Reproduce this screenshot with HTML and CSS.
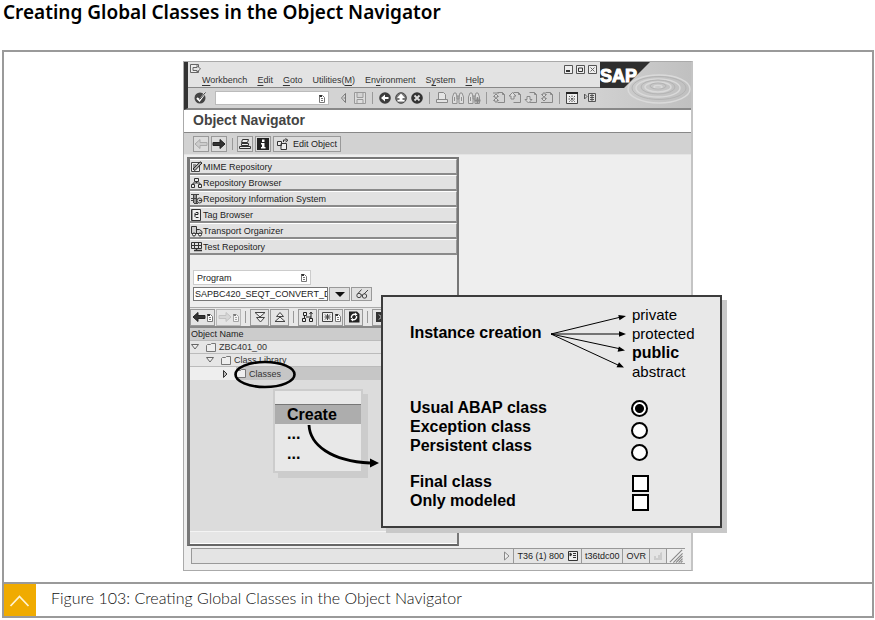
FILE: index.html
```html
<!DOCTYPE html>
<html lang="en">
<head>
<meta charset="utf-8">
<title>Creating Global Classes in the Object Navigator</title>
<link rel="stylesheet" href="styles.css">
</head>
<body>
<svg class="defs" aria-hidden="true">
  <symbol id="drop" viewBox="0 0 8 9"><path d="M1.500 1.500h3l2 2v5h-5zM3 4.500h2M3 6.500h2" fill="#fff" stroke="#777"/><path d="M1 1h3v2H2z" fill="#333"/></symbol>
  <symbol id="left" viewBox="0 0 14 12"><path d="M1 6l5-4.500v3h7v3H6v3z" stroke="currentColor"/></symbol>
  <symbol id="right" viewBox="0 0 14 12"><path d="M13 6L8 1.500v3H1v3h7v3z" stroke="currentColor"/></symbol>
  <symbol id="find" viewBox="0 0 16 16"><path d="M2.500 13.500V7l1.500-4h2l1 4v6.500zM9 13.500V7l1-4h2l1.500 4v6.500zM7 6h2v3H7zM4.500 7v4M11.500 7v4" fill="#ddd" stroke="#909090"/></symbol>
  <symbol id="page" viewBox="0 0 16 16"><path d="M6.500 2.500h5l2 2v8h-7M11.500 2.500v2h2" fill="none" stroke="#888"/></symbol>
  <symbol id="folder" viewBox="0 0 12 11"><path d="M1.500 9.500v-6l1-1h3l1-1h4v8z" fill="#eee" stroke="#777"/></symbol>
  <symbol id="hier" viewBox="0 0 13 12"><path d="M4.500 1.500h4v3h-4zM1.500 7.500h3v3h-3zM8.500 7.500h3v3h-3zM6.500 4.500V6M3 7.500V6h7v1.500" fill="#eee" stroke="#333"/></symbol>
</svg>

<h1>Creating Global Classes in the Object Navigator</h1>

<figure class="figure">
  <div class="stage">
    <section class="window" aria-label="Object Navigator">
      <header class="topbar">
        <div class="bars">
          <div class="menubar">
            <div class="sysrow">
              <svg class="sysicon" viewBox="0 0 12 10"><path d="M9.500 3V.5h-8v8h8V7M4 3.500h4v-2L11.500 5 8 8V6.500H4z" fill="#eee" stroke="#666"/></svg>
              <div class="winbtns">
                <button type="button" aria-label="Minimize"><svg viewBox="0 0 9 9"><path d="M.5.5h8v8h-8z" fill="#eee" stroke="#555"/><path d="M2 5h4v2H2z" fill="#333"/></svg></button>
                <button type="button" aria-label="Maximize"><svg viewBox="0 0 9 9"><path d="M.5.5h8v8h-8z" fill="#eee" stroke="#555"/><path d="M2.500 3h4v3.500h-4z" fill="none" stroke="#333"/></svg></button>
                <button type="button" aria-label="Close"><svg viewBox="0 0 9 9"><path d="M.5.5h8v8h-8z" fill="#eee" stroke="#555"/><path d="M2.500 2.500l4 4m0-4l-4 4" stroke="#666"/></svg></button>
              </div>
            </div>
            <nav class="menus">
              <a href="#"><u>W</u>orkbench</a><a href="#"><u>E</u>dit</a><a href="#"><u>G</u>oto</a><a href="#">Utilities(<u>M</u>)</a><a href="#">En<u>v</u>ironment</a><a href="#">S<u>y</u>stem</a><a href="#"><u>H</u>elp</a>
            </nav>
          </div>
          <div class="toolbar">
            <button type="button" class="cell" aria-label="Enter"><svg viewBox="0 0 16 16"><circle cx="8" cy="8" r="5.500" fill="#444"/><path d="M5 8l2.500 2.500L13 3" fill="none" stroke="#fff" stroke-width="2"/><path d="M7.500 9.500L13.500 2.500" stroke="#333"/></svg></button>
            <div class="command"><input type="text" aria-label="Command"><svg class="drop"><use href="#drop"/></svg></div>
            <button type="button" class="cell" aria-label="Collapse"><svg viewBox="0 0 16 16"><path d="M9.500 3.500L5.500 8l4 4.500zM7.500 8h2" fill="#ddd" stroke="#777"/></svg></button>
            <button type="button" class="cell" aria-label="Save"><svg viewBox="0 0 16 16"><path d="M2.500 2.500h11v11h-11zM5 2.500v5h6v-5M5 13.500v-4h6v4" fill="#ddd" stroke="#999"/></svg></button>
            <span class="sep"></span>
            <button type="button" class="cell" aria-label="Back"><svg viewBox="0 0 16 16"><circle cx="8" cy="8" r="5.800" fill="#3c3c3c"/><path d="M4 8l4-3.500V7h3.500v2H8v2.500z" fill="#fff"/></svg></button>
            <button type="button" class="cell" aria-label="Exit"><svg viewBox="0 0 16 16"><circle cx="8" cy="8" r="5.300" fill="#777" stroke="#444"/><path d="M8 3.500L12 8H9.500v2h2v1.500h-7V10h2V8H4z" fill="#fff"/></svg></button>
            <button type="button" class="cell" aria-label="Cancel"><svg viewBox="0 0 16 16"><circle cx="8" cy="8" r="5.800" fill="#333"/><path d="M5.500 5.500l5 5m0-5l-5 5" stroke="#ddd" stroke-width="1.800"/></svg></button>
            <span class="sep"></span>
            <button type="button" class="cell" aria-label="Print"><svg viewBox="0 0 16 16"><path d="M4.500 9V2.500h5l2 2V9M2.500 9.500h11v3h-11z" fill="#e4e4e4" stroke="#888"/></svg></button>
            <button type="button" class="cell" aria-label="Find"><svg><use href="#find"/></svg></button>
            <button type="button" class="cell" aria-label="Find next"><svg viewBox="0 0 16 16"><use href="#find"/><path d="M11.500 7.500v6M8.500 10.500h6" stroke="#888" stroke-width="2"/></svg></button>
            <span class="sep"></span>
            <button type="button" class="cell" aria-label="First page"><svg viewBox="0 0 16 16"><use href="#page"/><path d="M2 3h6M5 4L2.500 6.500H4V8h2V6.500h1.500zM5 8l-2.500 2.500H4V12h2v-1.500h1.500z" fill="#ddd" stroke="#888"/></svg></button>
            <button type="button" class="cell" aria-label="Previous page"><svg viewBox="0 0 16 16"><use href="#page"/><path d="M5.500 2.500L2 6h2v3h3V6h2z" fill="#ddd" stroke="#888"/></svg></button>
            <button type="button" class="cell" aria-label="Next page"><svg viewBox="0 0 16 16"><use href="#page"/><path d="M5.500 13L2 9.500h2v-3h3v3h2z" fill="#ddd" stroke="#888"/></svg></button>
            <button type="button" class="cell" aria-label="Last page"><svg viewBox="0 0 16 16"><use href="#page"/><path d="M5 7L2.500 4.500H4V3h2v1.500h1.500zM5 11L2.500 8.500H4V7h2v1.500h1.500zM2 12.500h6" fill="#ddd" stroke="#888"/></svg></button>
            <span class="sep"></span>
            <button type="button" class="cell" aria-label="New session"><svg viewBox="0 0 16 16"><path d="M2.500 2.500h11v11h-11z" fill="#eee" stroke="#444"/><path d="M2 3h12" stroke="#222" stroke-width="2"/><path d="M5 6l6 6m0-6l-6 6M8 5.500v7M4.500 9h7" stroke="#555" stroke-dasharray="1.500 1"/></svg></button>
            <button type="button" class="cell" aria-label="Shortcut"><svg viewBox="0 0 16 16"><path d="M2.500 4L5 6.500 2.500 9z" fill="none" stroke="#555"/><path d="M6.500 3.500h7v8h-7zM8 5.500h4M8 7.500h4M8 9.500h4M10 4v7" fill="#ddd" stroke="#555"/></svg></button>
          </div>
        </div>
        <svg class="logo" viewBox="0 0 91 46" role="img" aria-label="SAP">
          <defs><linearGradient id="water" x1="0" x2="1"><stop offset="0" stop-color="#d0d0d0"/><stop offset=".5" stop-color="#c8c8c8"/><stop offset="1" stop-color="#c0c0c0"/></linearGradient></defs>
          <path d="M0 0h91v46H0z" fill="url(#water)"/>
          <g fill="none" stroke="#dadada" stroke-width="1.500"><ellipse cx="58" cy="25" rx="4" ry="1.500"/><ellipse cx="58" cy="25" rx="13" ry="5"/><ellipse cx="58" cy="26" rx="22" ry="9"/><ellipse cx="59" cy="27" rx="31" ry="14"/></g>
          <g fill="none" stroke="#b4b4b4"><ellipse cx="58" cy="24" rx="8" ry="3"/><ellipse cx="58" cy="25" rx="17" ry="7"/><ellipse cx="59" cy="26" rx="27" ry="11.500"/></g>
          <path d="M0 0h50L24 26H0z" fill="#2e2e2e"/>
          <text x="0" y="20" class="logotext">SAP</text>
        </svg>
      </header>

      <h2 class="title">Object Navigator</h2>

      <div class="apptools">
        <button type="button" class="btn dim" aria-label="Previous object"><svg><use href="#left"/></svg></button>
        <button type="button" class="btn" aria-label="Next object"><svg class="solid"><use href="#right"/></svg></button>
        <span class="sep"></span>
        <button type="button" class="btn" aria-label="Other object"><svg viewBox="0 0 14 12"><path d="M4.500 1.500h6l-1 3h-6zM3.500 5.500h7v2h-7zM1.500 8.500h11v2h-11z" fill="#eee" stroke="#333"/></svg></button>
        <button type="button" class="btn" aria-label="Information"><svg viewBox="0 0 14 12"><path d="M1 0h12v12H1z" fill="#222"/><path d="M6 1.500h2.500V4H6zM5 5h3.500v4h1v1.500H5V9h1V6.500H5z" fill="#fff"/></svg></button>
        <button type="button" class="btn wide"><svg viewBox="0 0 14 12"><path d="M5 5.500h5.500v6H5zM1.500 3.500h4v4h-4z" fill="#eee" stroke="#333"/><path d="M7.500 4V2h3M9.500.500L12 2.300 9.500 4" fill="none" stroke="#333"/></svg>Edit Object</button>
      </div>

      <div class="body">
        <div class="panel">
          <div class="tools">
            <button type="button"><svg viewBox="0 0 13 12"><path d="M1.500 1.500h8v9h-8z" fill="#eee" stroke="#444"/><path d="M3 8l2 1.500L12 2 10 .8z" fill="#aaa" stroke="#222"/><path d="M3 4h3M3 6h2" stroke="#333"/></svg>MIME Repository</button>
            <button type="button"><svg><use href="#hier"/></svg>Repository Browser</button>
            <button type="button"><svg viewBox="0 0 13 12"><path d="M1 1.500h8M5 1.500v9M3.500 1v9M6.500 1v9M1 5.500h5M1 7.500h2M4 10.500h4" fill="none" stroke="#444"/><circle cx="9.500" cy="7.500" r="2.500" fill="#ccc" stroke="#444"/><path d="M9 7.500h3" stroke="#333"/></svg>Repository Information System</button>
            <button type="button"><svg viewBox="0 0 13 12"><path d="M1.500.500h9v11h-9z" fill="#eee" stroke="#333"/><path d="M2.500 1v10" stroke="#999"/><path d="M8.500 8.500H6L5 7.500v-3l1-1h2v2H5" fill="none" stroke="#222"/></svg>Tag Browser</button>
            <button type="button"><svg viewBox="0 0 13 12"><path d="M1.500 1.500h5v7h-5zM6.500 4.500h3l2.500 2v2H6.500z" fill="#ccc" stroke="#333"/><circle cx="4" cy="9.500" r="1.500" fill="#fff" stroke="#222"/><circle cx="10" cy="9.500" r="1.500" fill="#fff" stroke="#222"/></svg>Transport Organizer</button>
            <button type="button"><svg viewBox="0 0 13 12"><path d="M1.500 1.500h10v6h-10zM1 4.500h11M4.500 2v5M8.500 2v5" fill="#ddd" stroke="#333"/><path d="M4 9.500h8M6.500 7.500v2" stroke="#333" stroke-width="1.500"/></svg>Test Repository</button>
          </div>

          <div class="finder">
            <div class="kind">
              <select aria-label="Object type"><option>Program</option></select>
              <svg class="drop"><use href="#drop"/></svg>
            </div>
            <div class="objrow">
              <input type="text" aria-label="Object name" value="SAPBC420_SEQT_CONVERT_DATE">
              <button type="button" aria-label="History"><svg viewBox="0 0 14 12"><path d="M2 4h10L7 9z" fill="#111"/></svg></button>
              <button type="button" aria-label="Display"><svg viewBox="0 0 14 12"><circle cx="4" cy="7.500" r="2.200" fill="none" stroke="#444"/><circle cx="9.500" cy="8" r="2.200" fill="none" stroke="#444"/><path d="M3 5.500L6.500 1.500M9 6l4-4M6 7h1.500" stroke="#444"/></svg></button>
            </div>
          </div>

          <div class="treetools">
            <button type="button" class="pair" aria-label="Back"><svg class="solid"><use href="#left"/></svg><svg class="drop"><use href="#drop"/></svg></button>
            <button type="button" class="pair dim" aria-label="Forward"><svg><use href="#right"/></svg><svg class="drop"><use href="#drop"/></svg></button>
            <span class="sep"></span>
            <button type="button" aria-label="Expand"><svg viewBox="0 0 14 12"><path d="M2 1.500h10L7 6zM3.500 6.500h8L7.500 11z" fill="#eee" stroke="#444"/></svg></button>
            <button type="button" aria-label="Collapse"><svg viewBox="0 0 14 12"><path d="M3.500 5.500L7 1.500l3.500 4zM2 10.500l5-4.500 5 4.500z" fill="#eee" stroke="#444"/></svg></button>
            <span class="sep"></span>
            <button type="button" aria-label="Hierarchy"><svg viewBox="0 0 14 12"><path d="M2.500 1.500h3v3h-3zM1.500 7.500h3v3h-3zM8.500 7.500h3v3h-3zM3.500 4.500v3M10 7V2M8.500 3L10 1l1.500 2M5 6h5" fill="#eee" stroke="#222"/></svg></button>
            <button type="button" class="pair" aria-label="Favorites"><svg viewBox="0 0 14 12"><path d="M2.500 1.500h10v9h-10z" fill="#eee" stroke="#444"/><path d="M5 3.500l5 5m0-5l-5 5M7.500 3v6M4.500 6h6" stroke="#444"/></svg><svg class="drop"><use href="#drop"/></svg></button>
            <button type="button" aria-label="Refresh"><svg viewBox="0 0 14 12"><path d="M2 .5h8l2.500 2.500v8.500H2z" fill="#222"/><path d="M4.500 7a3 3 0 0 1 4-3.500M9.500 5a3 3 0 0 1-4 3.500" fill="none" stroke="#fff" stroke-width="1.500"/><path d="M8 1.500l2.500 2L8 5zM6 7L3.500 8.500 6 10.500z" fill="#fff"/></svg></button>
            <span class="sep"></span>
            <button type="button" aria-label="Close tree"><svg viewBox="0 0 14 12"><path d="M1 1h12v10H1z" fill="#333"/><path d="M4 3.500l5 5m0-5l-5 5" stroke="#ddd"/></svg></button>
          </div>

          <div class="treehead">Object Name</div>
          <ul class="tree">
            <li class="lv1"><svg class="twist" viewBox="0 0 8 8"><path d="M.5 1.500h7L4 6z" fill="#eee" stroke="#666"/></svg><svg class="fold"><use href="#folder"/></svg>ZBC401_00</li>
            <li class="lv2"><svg class="twist" viewBox="0 0 8 8"><path d="M.5 1.500h7L4 6z" fill="#eee" stroke="#666"/></svg><svg class="fold"><use href="#folder"/></svg>Class Library</li>
            <li class="lv3"><svg class="twist" viewBox="0 0 8 8"><path d="M2.500.500v7L6 4z" fill="#bbb" stroke="#333"/></svg><svg class="fold"><use href="#folder"/></svg>Classes</li>
          </ul>
          <div class="treefoot"></div>
        </div>
      </div>

      <footer class="status">
        <span class="message"><svg viewBox="0 0 8 10"><path d="M1.500 1v8L6 5z" fill="#eee" stroke="#888"/></svg></span>
        <span class="seg">T36 (1) 800 <svg viewBox="0 0 10 10"><path d="M.5.500h9v9h-9z" fill="#eee" stroke="#333"/><path d="M2 2l2 1.500L2 5zM5 2.500h3M5 4.500h3M5 6.500h3" fill="#333" stroke="#333"/></svg></span>
        <span class="seg">t36tdc00</span>
        <span class="seg">OVR</span>
        <span class="seg"><svg viewBox="0 0 10 10"><path d="M1 9V5h2v2h2V4h2V2l2-1v8z" fill="#ccc"/></svg></span>
        <span class="grip"><svg viewBox="0 0 16 16"><path d="M1 15L15 1M5 15.500L15.500 5M8 15.500l7.500-7.500M11 15.500l4.500-4.500M13.500 15.500l2-2" stroke="#888" stroke-width="1.300"/></svg></span>
      </footer>

      <div class="context" role="menu">
        <button type="button" role="menuitem" class="active">Create</button>
        <button type="button" role="menuitem">...</button>
        <button type="button" role="menuitem">...</button>
      </div>

      <form class="popup">
        <div class="instance">
          <h3>Instance creation</h3>
          <svg class="fan" viewBox="0 0 77 76"><path d="M0 29L70 12M0 29h70M0 29l70 15M0 29l67 31" fill="none" stroke="#000"/><path d="M75 11l-6.500 4.200-1.200-5.200zM75 29l-7 2.700v-5.400zM74 45.500l-7.400 1.200 1.300-5.200zM73 62.500l-7.500-.3 2.500-5z"/></svg>
          <ul class="kinds"><li>private</li><li>protected</li><li><b>public</b></li><li>abstract</li></ul>
        </div>
        <div class="choices first">
          <div class="labels"><label for="usual">Usual ABAP class</label><label for="exception">Exception class</label><label for="persistent">Persistent class</label></div>
          <div class="inputs radios"><input type="radio" name="kind" id="usual" checked><input type="radio" name="kind" id="exception"><input type="radio" name="kind" id="persistent"></div>
        </div>
        <div class="choices">
          <div class="labels"><label for="final">Final class</label><label for="modeled">Only modeled</label></div>
          <div class="inputs checks"><input type="checkbox" id="final"><input type="checkbox" id="modeled"></div>
        </div>
      </form>

      <svg class="marks" viewBox="0 0 200 420" aria-hidden="true">
        <ellipse cx="81" cy="312.500" rx="29.500" ry="12.500" fill="none" stroke="#000" stroke-width="2.600"/>
        <path d="M125 363c1 20 22 36 61 38" fill="none" stroke="#000" stroke-width="2.800"/>
        <path d="M195 401l-9 4.500v-9z"/>
      </svg>
    </section>
  </div>
  <figcaption>
    <span class="flag"><svg viewBox="0 0 32 32"><path d="M6.500 22l9-9.500 9 9.500" fill="none" stroke="#fff3d0" stroke-width="1.800"/></svg></span>
    <span class="caption">Figure 103: Creating Global Classes in the Object Navigator</span>
  </figcaption>
</figure>
</body>
</html>
```
FILE: styles.css
```css
* { box-sizing: border-box; }
body { margin: 0; background: #fff; color: #000; font-family: "Noto Sans", "Open Sans", sans-serif; }
.defs { position: absolute; width: 0; height: 0; }
svg { display: block; flex: none; }
button, input, select { font: inherit; color: inherit; margin: 0; padding: 0; border: 0; background: none; border-radius: 0; }
ul, h1, h2, h3 { margin: 0; padding: 0; list-style: none; }

h1 { padding-left: 3px; font-size: 19px; line-height: 24px; font-weight: 600; }
.figure { margin: 26px 1px 0 2px; border: 2px solid #9a9a9a; }
.stage { padding: 9px 0 11px; }

.window {
  position: relative; display: flex; flex-direction: column;
  max-width: 510px; min-height: 510px; margin: 0 auto;
  border: 1px solid #aaa; border-right: 2px solid #c4c4c4;
  background: #eee; color: #222;
  font: 9px/12px "Liberation Sans", Arial, sans-serif;
}

.topbar { display: flex; height: 48px; border-bottom: 2px solid #888; border-left: 4px solid #333; }
.bars { flex: 1; display: flex; flex-direction: column; }
.menubar { height: 26px; background: #e3e3e3; border-bottom: 1px solid #888; }
.sysrow { display: flex; justify-content: space-between; height: 12px; padding: 2px 3px 0 1px; }
.sysicon { width: 12px; height: 10px; }
.winbtns { display: flex; gap: 3px; }
.winbtns svg { width: 9px; height: 9px; }
.winbtns button { display: flex; align-items: center; }
.menus { display: flex; gap: 10px; padding-left: 14px; }
.menus a { color: #333; text-decoration: none; }
.menus u { text-underline-offset: 2px; }
.toolbar { flex: 1; display: flex; align-items: center; padding-left: 4px; background: #d3d3d3; }
.cell, .cell svg { width: 16px; height: 16px; flex: none; }
.cell:last-child { margin-left: 2px; }
.command { display: flex; align-items: center; width: 114px; height: 14px; margin: 0 7px; padding-right: 2px; background: #fff; border: 1px solid #bbb; }
.command input { flex: 1; min-width: 0; height: 12px; }
.drop { width: 8px; height: 9px; }
.sep { flex: none; width: 9px; height: 12px; background: linear-gradient(#999, #999) center / 1px 100% no-repeat; }
.logo { width: 91px; height: 46px; }
.logotext { font: bold 18px "Liberation Sans", Arial, sans-serif; fill: #fff; stroke: #fff; stroke-width: 1px; }

.title { height: 22px; padding-left: 9px; background: #fff; color: #444; font-size: 14px; line-height: 21px; }
.apptools { display: flex; align-items: center; gap: 2px; height: 23px; padding-left: 9px; background: #d2d2d2; border-top: 1px solid #888; border-bottom: 1px solid #e4e4e4; }
.apptools .sep { width: 6px; }
.btn { display: flex; align-items: center; justify-content: center; width: 16px; height: 16px; border: 1px solid #999; background: #dcdcdc; }
.btn svg { width: 14px; height: 12px; }
.btn.wide { width: auto; padding: 0 3px 0 2px; gap: 3px; }
.solid { fill: #333; color: #222; }
.dim { color: #aaa; fill: #ccc; }

.body { flex: 1; display: flex; padding: 2px 0 0 3px; }
.panel { display: flex; flex-direction: column; width: 272px; background: #eee; border: 2px solid #777; border-left-width: 3px; border-bottom-color: #666; }
.tools { display: flex; flex-direction: column; }
.tools button { display: flex; align-items: center; height: 16px; background: #e2e2e2; border: 0 solid #999; border-width: 1px 1px 2px 0; border-top-color: #fff; border-bottom-color: #8a8a8a; }
.tools svg { width: 13px; height: 12px; }

.finder { display: flex; flex-direction: column; gap: 2px; padding: 15px 0 6px 3px; }
.kind { display: flex; align-items: center; width: 118px; height: 15px; padding: 0 2px 0 3px; background: #fff; border: 1px solid #ccc; }
.kind select { flex: 1; min-width: 0; appearance: none; }
.objrow { display: flex; gap: 1px; height: 14px; }
.objrow input { width: 135px; padding-left: 1px; background: #fff; border: 1px solid #777; }
.objrow button { display: flex; align-items: center; justify-content: center; width: 21px; border: 1px solid #999; background: #e0e0e0; }
.objrow svg, .treetools svg { width: 14px; height: 12px; }

.treetools { display: flex; align-items: center; gap: 1px; height: 19px; overflow: hidden; border-top: 1px solid #aaa; background: #e8e8e8; }
.treetools .sep { width: 7px; }
.treetools button { display: flex; flex: none; align-items: center; justify-content: center; width: 19px; height: 17px; border: 1px solid #999; background: #e4e4e4; }
.treetools .pair { width: 25px; }
.treetools svg.drop { width: 8px; height: 9px; }
.treetools .dim { opacity: .6; }
.treehead { height: 14px; padding-left: 1px; line-height: 13px; background: #ccc; border-top: 2px solid #888; }
.tree { flex: 1; background: #dcdcdc; }
.tree li { display: flex; align-items: center; height: 13px; color: #333; border-top: 1px solid #bbb; background: #e6e6e6; }
.tree .lv1 { padding-left: 1px; }
.tree .lv2 { padding-left: 16px; }
.tree .lv3 { padding-left: 31px; height: 14px; background: linear-gradient(90deg, #eee 46px, #c6c6c6 46px); }
.twist { width: 8px; height: 8px; margin-right: 6px; }
.fold { width: 12px; height: 11px; margin-right: 2px; }
.treefoot { height: 13px; background: #e6e6e6; border-top: 1px solid #f4f4f4; border-bottom: 1px solid #fff; }

.status { display: flex; height: 16px; margin: 2px 6px 6px 7px; line-height: 14px; border: 1px solid #999; border-right: 0; background: #e4e4e4; }
.message { flex: 1; display: flex; align-items: center; justify-content: flex-end; padding-right: 2px; }
.message svg { width: 8px; height: 10px; }
.seg { display: flex; align-items: center; gap: 4px; padding: 0 3px; border-left: 1px solid #999; }
.seg svg { width: 10px; height: 10px; }
.grip { border-left: 1px solid #999; background: #eee; }
.grip svg { width: 18px; height: 14px; }

.context { position: absolute; left: 89px; top: 327px; width: 90px; padding: 13px 0 7px; background: #e8e8e8; border: 2px solid #ccc; box-shadow: 5px 5px #ccc; font-size: 16px; font-weight: bold; }
.context button { display: block; width: 100%; height: 20px; padding-left: 12px; text-align: left; line-height: 18px; color: #000; }
.context .active { background: #adadad; border-top: 1px solid #777; }

.popup { position: absolute; left: 197px; top: 233px; width: 341px; padding: 8px 0 16px 27px; color: #000; background: #e8e8e8; border: 2px solid #3c3c3c; box-shadow: 5px 5px #c8c8c8; font-size: 16px; line-height: 19px; font-weight: bold; }
.instance { display: flex; }
.instance h3 { width: 141px; padding-top: 18px; font-size: 16px; }
.fan { width: 77px; height: 76px; margin-right: 4px; }
.kinds { font-size: 15px; font-weight: normal; }
.kinds b { font-size: 16px; }
.choices { display: flex; height: 57px; }
.choices.first { margin: 17px 0; }
.choices:last-child { height: 38px; }
.labels { display: flex; flex-direction: column; width: 221px; }
.inputs { display: flex; flex-direction: column; }
.inputs input { appearance: none; flex: none; width: 17px; height: 17px; margin: 0; background: #fff; border: 2px solid #000; }
.radios { gap: 5px; padding-top: 2px; }
.radios input { border-radius: 50%; }
.radios input:checked { background: radial-gradient(#000 4px, #fff 5px); }
.checks { gap: 2px; padding: 3px 0 0 1px; }
.marks { position: absolute; left: 0; top: 0; width: 200px; height: 420px; pointer-events: none; }

figcaption { display: flex; align-items: center; height: 34px; border-top: 2px solid #9a9a9a; }
.flag { background: #f0ab00; }
.flag svg { width: 32px; height: 32px; }
.caption { padding: 0 0 4px 15px; font: 300 16px/28px Lato, "Open Sans", sans-serif; color: #111; }
```
